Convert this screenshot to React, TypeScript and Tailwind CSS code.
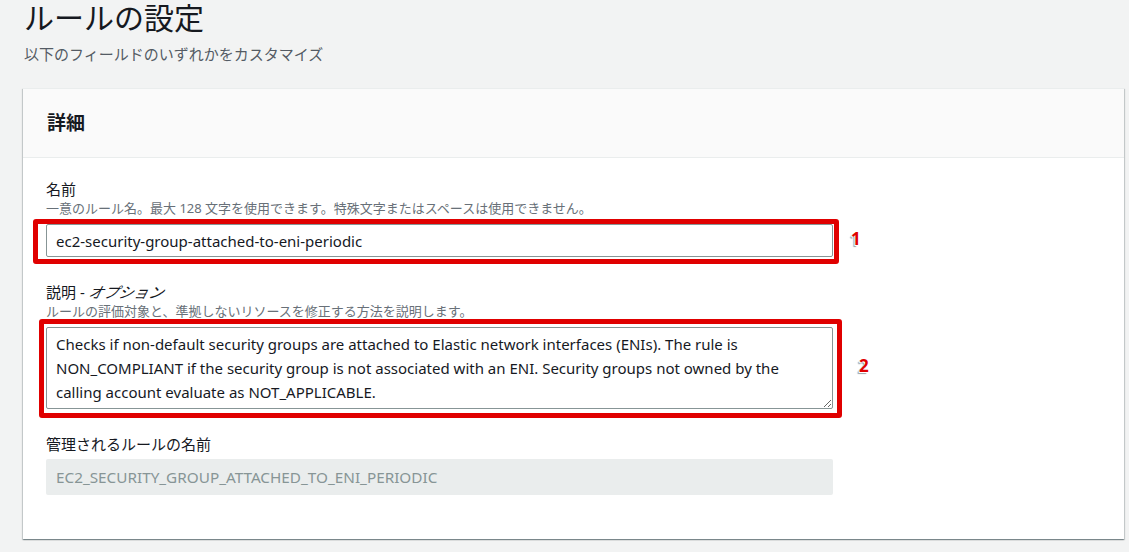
const jp = "font-['Noto_Sans','Noto_Sans_CJK_JP',sans-serif]"

const Marker = ({ n, className }: { n: string; className: string }) => (
  <span
    className={`absolute text-[17px] font-bold leading-none text-[#e00000] [text-shadow:-1px_1px_0_#fff,1px_-1px_0_#fff,-2px_2px_1px_#9aa0a6] ${className}`}
  >
    {n}
  </span>
)

const Field = ({ label, hint, children }: { label: React.ReactNode; hint?: string; children: React.ReactNode }) => (
  <div className="flex flex-col">
    <label className="text-[15px] leading-[20px] text-[#16191f]">{label}</label>
    {hint && <p className="text-[13px] leading-[18px] text-[#687078]">{hint}</p>}
    <div className={hint ? "mt-[7px]" : "mt-[5px]"}>{children}</div>
  </div>
)

export default function App() {
  return (
    <div className={`min-h-screen bg-[#f2f3f3] pl-[23px] pr-[5px] ${jp}`}>
      <h1 className="pl-px text-[30px] leading-[36px] text-[#16191f]">ルールの設定</h1>
      <p className="mt-[7px] pl-px text-[15px] leading-[22px] text-[#545b64]">以下のフィールドのいずれかをカスタマイズ</p>

      <div className="mt-[23px] border-t border-[#eaeded] bg-white shadow-[0_1px_1px_0_rgba(0,28,36,0.3),1px_1px_1px_0_rgba(0,28,36,0.15),-1px_1px_1px_0_rgba(0,28,36,0.15)]">
        <div className="border-b border-[#eaeded] bg-[#fafafa] px-[24px] py-[21px]">
          <h2 className="text-[19px] font-bold leading-[26px] text-[#16191f]">詳細</h2>
        </div>

        <div className="flex flex-col gap-[25px] px-[23px] pb-[44px] pt-[21px]">
          <Field label="名前" hint="一意のルール名。最大 128 文字を使用できます。特殊文字またはスペースは使用できません。">
            <div className="relative w-[787px]">
              <input
                readOnly
                value="ec2-security-group-attached-to-eni-periodic"
                className="block h-[33px] w-full rounded-[2px] border border-[#879596] px-[9px] text-[15px] text-[#16191f] outline-none"
              />
              <div className="pointer-events-none absolute -bottom-[7px] -left-[13px] -right-[6px] -top-[5px] rounded-[3px] border-[5px] border-[#e00000]" />
              <Marker n="1" className="left-[805px] top-[6px]" />
            </div>
          </Field>

          <Field
            label={
              <>
                説明 - <span className="inline-block -skew-x-[14deg] italic">オプション</span>
              </>
            }
            hint="ルールの評価対象と、準拠しないリソースを修正する方法を説明します。"
          >
            <div className="relative w-[787px]">
              <textarea
                readOnly
                wrap="off"
                value={
                  "Checks if non-default security groups are attached to Elastic network interfaces (ENIs). The rule is\nNON_COMPLIANT if the security group is not associated with an ENI. Security groups not owned by the\ncalling account evaluate as NOT_APPLICABLE."
                }
                className="block h-[82px] w-full resize-y overflow-hidden rounded-[2px] border border-[#879596] px-[9px] py-[4px] text-[15px] leading-[24px] text-[#16191f] outline-none"
              />
              <div className="pointer-events-none absolute -bottom-[9px] -left-[7px] -right-[9px] -top-[8px] rounded-[3px] border-[5px] border-[#e00000]" />
              <Marker n="2" className="left-[813px] top-[30px]" />
            </div>
          </Field>

          <Field label="管理されるルールの名前">
            <div className="flex h-[36px] w-[787px] items-center rounded-[2px] bg-[#eaeded] px-[10px] text-[15.3px] text-[#879596]">
              EC2_SECURITY_GROUP_ATTACHED_TO_ENI_PERIODIC
            </div>
          </Field>
        </div>
      </div>
    </div>
  )
}
